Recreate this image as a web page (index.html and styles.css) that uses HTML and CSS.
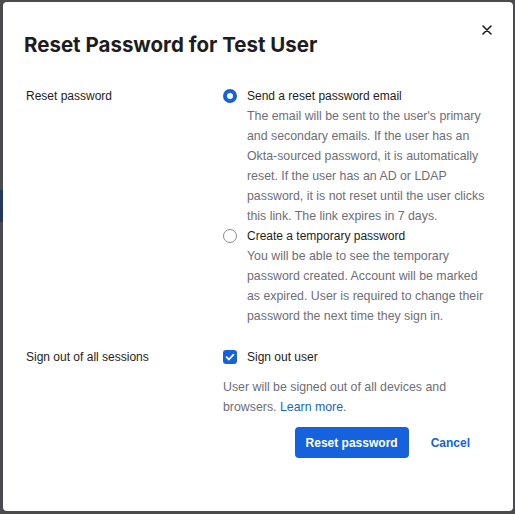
FILE: index.html
```html
<!DOCTYPE html>
<html>
<head>
<meta charset="utf-8">
<link rel="stylesheet" href="styles.css">
</head>
<body>
<div class="backdrop">
  <div class="bg-strip"></div>
  <div class="modal">
    <button class="close" aria-label="Close">
      <svg width="10" height="10" viewBox="0 0 10 10"><path d="M1 1L9 9M9 1L1 9" stroke="#1d1d21" stroke-width="1.6" stroke-linecap="round"/></svg>
    </button>
    <h1 class="title">Reset Password for Test User</h1>
    <div class="form">
      <div class="label">Reset password</div>
      <div class="field">
        <div class="option">
          <span class="radio checked"></span>
          <div class="option-body">
            <div class="option-label">Send a reset password email</div>
            <div class="hint">The email will be sent to the user's primary and secondary emails. If the user has an Okta-sourced password, it is automatically reset. If the user has an AD or LDAP password, it is not reset until the user clicks this link. The link expires in 7 days.</div>
          </div>
        </div>
        <div class="option">
          <span class="radio"></span>
          <div class="option-body">
            <div class="option-label">Create a temporary password</div>
            <div class="hint">You will be able to see the temporary password created. Account will be marked as expired. User is required to change their password the next time they sign in.</div>
          </div>
        </div>
      </div>

      <div class="label second">Sign out of all sessions</div>
      <div class="field second">
        <div class="option">
          <span class="checkbox">
            <svg width="14" height="14" viewBox="0 0 14 14"><path d="M3.6 7.2L6 9.5L10.5 4.6" fill="none" stroke="#fff" stroke-width="1.8" stroke-linecap="round" stroke-linejoin="round"/></svg>
          </span>
          <div class="option-body">
            <div class="option-label">Sign out user</div>
          </div>
        </div>
        <p class="hint signout">User will be signed out of all devices and browsers. <a class="link" href="#">Learn more</a>.</p>
        <div class="actions">
          <button class="primary">Reset password</button>
          <button class="cancel">Cancel</button>
        </div>
      </div>
    </div>
  </div>
</div>
</body>
</html>
```
FILE: styles.css
```css
* { box-sizing: border-box; }
html, body { margin: 0; padding: 0; }
body {
  width: 515px;
  height: 514px;
  background: #4b4b4f;
  font-family: "Liberation Sans", Arial, sans-serif;
  overflow: hidden;
}
.backdrop {
  position: relative;
  width: 515px;
  height: 514px;
  padding: 2px 2px 3px 3px;
}
.bg-strip {
  position: absolute;
  left: 0;
  top: 190px;
  width: 3px;
  height: 32px;
  background: #23385e;
}
.modal {
  position: relative;
  height: 509px;
  background: #fff;
  border-radius: 4px;
  padding: 29px 24px 0 21px;
}
.close {
  position: absolute;
  top: 22px;
  right: 20px;
  width: 12px;
  height: 12px;
  padding: 0;
  border: 0;
  background: none;
  display: flex;
  align-items: center;
  justify-content: center;
}
.title {
  margin: 0 0 27px 0;
  font-family: Inter, "Liberation Sans", sans-serif;
  font-size: 20.5px;
  line-height: 28px;
  font-weight: 700;
  color: #1d1d21;
}
.form {
  display: grid;
  grid-template-columns: 197px 1fr;
  padding-left: 2px;
  font-size: 12px;
  line-height: 20px;
}
.label {
  color: #1d1d21;
}
.second { margin-top: 21px; }
.option {
  display: flex;
  gap: 10px;
}
.radio, .checkbox {
  flex: none;
  width: 14px;
  height: 14px;
  margin-top: 3px;
}
.radio {
  border-radius: 50%;
  border: 1px solid #8c8c96;
  background: #fff;
}
.radio.checked {
  border: 4.5px solid #1662dd;
}
.checkbox {
  background: #1662dd;
  border-radius: 3px;
  display: flex;
}
.option-label {
  color: #1d1d21;
}
.hint {
  color: #6e6e78;
  font-size: 12.35px;
}
.hint.signout {
  margin: 10px 0 0 0;
}
.link {
  color: #1662dd;
  text-decoration: none;
}
.actions {
  display: flex;
  align-items: center;
  justify-content: flex-end;
  gap: 22px;
  margin-top: 10px;
  padding-right: 19px;
}
.primary {
  height: 31px;
  padding: 0 11px;
  background: #1662dd;
  color: #fff;
  border: 0;
  border-radius: 4px;
  font-family: inherit;
  font-size: 12px;
  font-weight: 700;
}
.cancel {
  padding: 0;
  border: 0;
  background: none;
  color: #1662dd;
  font-family: inherit;
  font-size: 12px;
  font-weight: 700;
}
```
